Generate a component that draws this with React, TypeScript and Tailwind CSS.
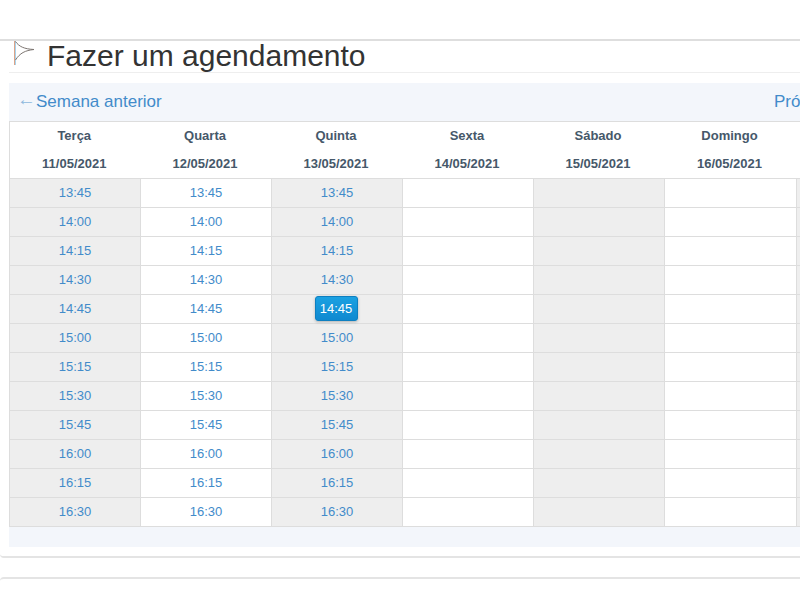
const days = [
  { name: 'Terça', date: '11/05/2021', shaded: true, open: true },
  { name: 'Quarta', date: '12/05/2021', shaded: false, open: true },
  { name: 'Quinta', date: '13/05/2021', shaded: true, open: true },
  { name: 'Sexta', date: '14/05/2021', shaded: false, open: false },
  { name: 'Sábado', date: '15/05/2021', shaded: true, open: false },
  { name: 'Domingo', date: '16/05/2021', shaded: false, open: false },
  { name: '', date: '', shaded: true, open: false },
]

const times = ['13:45', '14:00', '14:15', '14:30', '14:45', '15:00', '15:15', '15:30', '15:45', '16:00', '16:15', '16:30']

function FlagIcon() {
  return (
    <svg width="24" height="26" viewBox="0 0 24 26" fill="none" className="shrink-0">
      <path d="M1.5 0v24" stroke="#dda488" strokeWidth="1" />
      <path d="M2.5 0v24" stroke="#a6d3ec" strokeWidth="1" />
      <path d="M2.5 0.5C6 5.5 11 8 21 8.5C12 9.5 7 12 2.5 19" stroke="#7d7672" strokeWidth="1" />
    </svg>
  )
}

export default function App() {
  return (
    <div className="w-[800px] h-[600px] overflow-hidden bg-white font-['Liberation_Sans',sans-serif]">
      <div className="h-[41px] border-b-2 border-[#dedede]" />
      <div className="ml-[9px]">
        <div className="flex h-[32px] items-start gap-[10px] pl-[4px] border-b border-[#eeeeee]">
          <FlagIcon />
          <h1 className="text-[30px] leading-[30px] text-[#333333] whitespace-nowrap">Fazer um agendamento</h1>
        </div>
        <div className="mt-[10px] bg-[#f3f6fb]">
          <div className="flex h-[38px] items-center justify-between whitespace-nowrap text-[17px] text-[#428bca]">
            <a className="pl-[10px]">
              <span className="inline-block -translate-y-[2px] -translate-x-px scale-x-110 text-[#8fb9de]">←</span>Semana anterior
            </a>
            <a className="w-[26px] overflow-hidden">Próxima</a>
          </div>
          <table className="border-collapse table-fixed w-[919px] text-[13px]">
            <thead>
              <tr className="border-t border-[#dddddd]">
                {days.map((d, i) => (
                  <th key={i} className={`${i === 5 ? 'w-[132px]' : 'w-[131px]'} h-[28px] p-0 pr-[2px] bg-white font-bold text-[#46586a] ${i === 0 ? 'border-l border-[#dddddd]' : ''}`}>
                    {d.name}
                  </th>
                ))}
              </tr>
              <tr className="border-b border-[#dddddd]">
                {days.map((d, i) => (
                  <th key={i} className={`h-[29px] p-0 pr-[2px] pb-px bg-white font-bold text-[#46586a] ${i === 0 ? 'border-l border-[#dddddd]' : ''}`}>
                    {d.date}
                  </th>
                ))}
              </tr>
            </thead>
            <tbody>
              {times.map((t) => (
                <tr key={t}>
                  {days.map((d, i) => {
                    const selected = i === 2 && t === '14:45'
                    return (
                      <td key={i} className={`h-[29px] p-0 text-center border border-[#dddddd] ${d.shaded ? 'bg-[#eeeeee]' : 'bg-white'}`}>
                        {d.open && !selected && <a className="text-[#428bca]">{t}</a>}
                        {selected && (
                          <a className="inline-block w-[43px] h-[25px] mr-[2px] mb-[2px] leading-[24px] align-middle rounded-[3px] border border-[#0e7fc0] bg-gradient-to-b from-[#1ba1e2] to-[#0f89d0] text-white shadow-[0_1px_3px_rgba(0,0,0,0.25)]">
                            {t}
                          </a>
                        )}
                      </td>
                    )
                  })}
                </tr>
              ))}
            </tbody>
          </table>
          <div className="h-[20px]" />
        </div>
      </div>
      <div className="mt-[5px] h-[6px] rounded-bl-[4px] border-b-2 border-[#e4e4e4]" />
      <div className="mt-[19px] h-[6px] rounded-tl-[4px] border-t-2 border-[#e4e4e4]" />
    </div>
  )
}
